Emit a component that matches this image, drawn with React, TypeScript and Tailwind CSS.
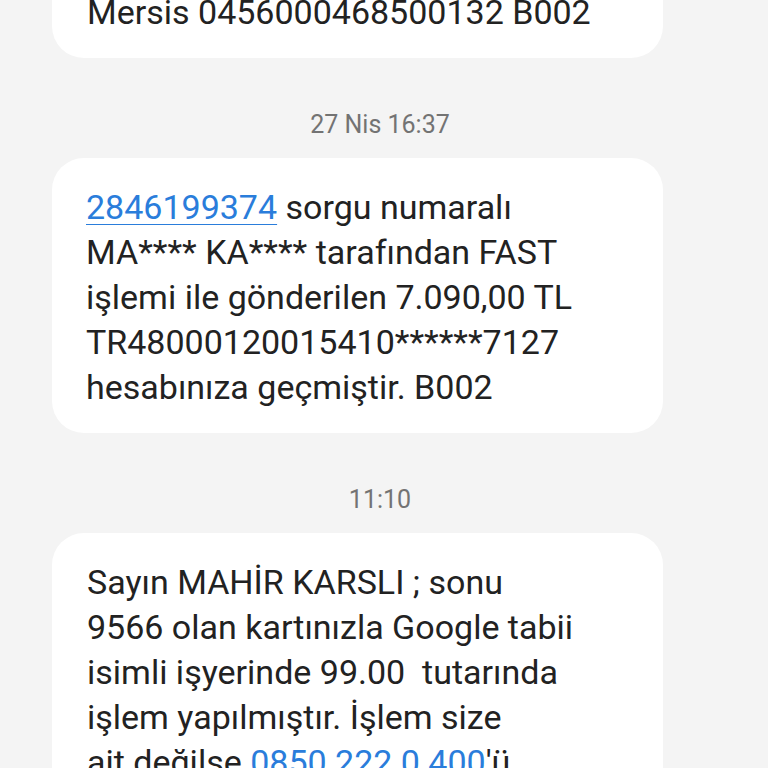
export default function App() {
  return (
    <div className="min-h-screen h-[768px] overflow-hidden bg-[#f4f4f4] font-['Roboto',sans-serif] text-[#222222]">
      <div className="flex flex-col -mt-[34px]">
        {/* earlier message, only its last line is visible */}
        <div className="ml-[52px] w-[611px] rounded-[32px] bg-white pl-[35px] pr-[24px] pt-[24px] pb-[23px] text-[34px] leading-[45px]">
          <p className="whitespace-nowrap">Mersis 0456000468500132 B002</p>
        </div>

        <div className="h-[100px] flex items-end justify-center pr-[8px] pb-[18px] text-[25px] leading-[30px] text-[#737373]">
          27 Nis 16:37
        </div>

        <div className="ml-[52px] w-[611px] rounded-[32px] bg-white pl-[34px] pr-[24px] pt-[27px] pb-[23px] text-[34px] leading-[45px]">
          <p className="whitespace-nowrap">
            <span className="text-[#2a7ddb] underline decoration-1 underline-offset-[5px]">2846199374</span> sorgu numaralı
            <br />
            MA**** KA**** tarafından FAST
            <br />
            işlemi ile gönderilen 7.090,00 TL
            <br />
            TR48000120015410******7127
            <br />
            hesabınıza geçmiştir. B002
          </p>
        </div>

        <div className="h-[100px] flex items-end justify-center pr-[8px] pb-[18px] text-[25px] leading-[30px] text-[#737373]">
          11:10
        </div>

        <div className="ml-[52px] w-[611px] rounded-[32px] bg-white pl-[35px] pr-[24px] pt-[27px] pb-[23px] text-[34px] leading-[45px]">
          <p className="whitespace-nowrap">
            Sayın MAHİR KARSLI ; sonu
            <br />
            9566 olan kartınızla Google tabii
            <br />
            isimli işyerinde 99.00&nbsp; tutarında
            <br />
            işlem yapılmıştır. İşlem size
            <br />
            ait değilse <span className="text-[#2a7ddb] underline decoration-1 underline-offset-[5px]">0850 222 0 400</span>'ü
            <br />
            arayınız.
          </p>
        </div>
      </div>
    </div>
  );
}
